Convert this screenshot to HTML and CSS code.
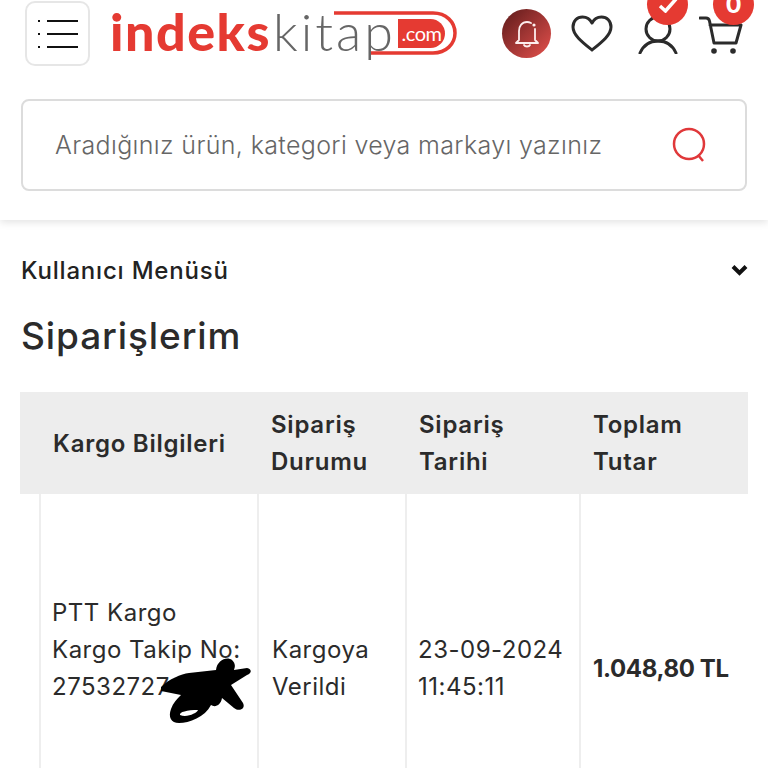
FILE: index.html
```html
<!DOCTYPE html>
<html lang="tr">
<head>
    <meta charset="UTF-8">
    <meta name="viewport" content="width=device-width, initial-scale=1.0">
    <title>Siparişlerim</title>
    <link rel="stylesheet" href="styles.css">
</head>
<body>
<!-- Header with logo, icons and search -->
<header class="site-header">
    <div class="top-row">
        <button class="menu-btn" type="button" aria-label="Menü">
            <svg width="42" height="32" viewBox="0 0 42 32">
                <path d="M1 3h2M1 16h2M1 29h2M10 3h31M10 16h31M10 29h31" stroke="#111" stroke-width="2" fill="none"/>
            </svg>
        </button>
        <a class="logo" href="#">
            <span class="logo-bold">indeks</span><span class="logo-thin">kitap</span>
            <span class="logo-com">.com</span>
            <svg class="logo-ring" width="125" height="46" viewBox="0 0 125 46">
                <path d="M1 3H100C113 3 122 12 122 23C122 34 113 43 100 43H38" stroke="#e53a32" stroke-width="3.5" fill="none"/>
            </svg>
        </a>
        <div class="icons">
            <span class="bell">
                <svg width="28" height="32" viewBox="0 0 28 32">
                    <path d="M6 22V13C6 8 9 4 14 4C16 4 17 4.500 18 5M22 11V22L25 25H3L6 22M11 27C12 29 16 29 17 27" stroke="#fdeeee" stroke-width="1.800" fill="none" stroke-linecap="round" stroke-linejoin="round"/>
                    <circle cx="21" cy="7" r="1.600" fill="#fdeeee"/>
                </svg>
            </span>
            <svg class="heart" width="44" height="38" viewBox="0 0 44 38">
                <path d="M22 35C12 27 3 20 3 12C3 6 7 2 12.500 2C16.500 2 20 4 22 8C24 4 27.500 2 31.500 2C37 2 41 6 41 12C41 20 32 27 22 35Z" stroke="#2b2b2b" stroke-width="3" fill="none" stroke-linejoin="round"/>
            </svg>
            <span class="icon-wrap">
                <svg width="40" height="38" viewBox="0 0 40 38">
                    <circle cx="20" cy="13" r="12" stroke="#2b2b2b" stroke-width="3" fill="none"/>
                    <path d="M2 37C6 28 12 25 20 25C28 25 34 28 38 37" stroke="#2b2b2b" stroke-width="3" fill="none" stroke-linecap="round"/>
                </svg>
                <span class="badge badge-user">
                    <svg width="20" height="16" viewBox="0 0 20 16"><path d="M2 9L7.500 14L18 2" stroke="#fff" stroke-width="3.500" fill="none"/></svg>
                </span>
            </span>
            <span class="icon-wrap icon-cart">
                <svg width="44" height="38" viewBox="0 0 44 38">
                    <path d="M1 2H7C9 2 10 3 10.500 5L15 27H37L42 9H11" stroke="#2b2b2b" stroke-width="3" fill="none" stroke-linecap="round" stroke-linejoin="round"/>
                    <circle cx="15" cy="35" r="2.800" fill="#2b2b2b"/>
                    <circle cx="34" cy="35" r="2.800" fill="#2b2b2b"/>
                </svg>
                <span class="badge badge-cart">0</span>
            </span>
        </div>
    </div>
    <div class="search-box">
        <span class="search-text">Aradığınız ürün, kategori veya markayı yazınız</span>
        <svg width="36" height="36" viewBox="0 0 36 36">
            <circle cx="17" cy="17" r="15" stroke="#e0383a" stroke-width="2.500" fill="none"/>
            <path d="M26 28L31 34" stroke="#e0383a" stroke-width="2.500"/>
        </svg>
    </div>
</header>

<main class="content">
    <div class="user-menu">
        <span>Kullanıcı Menüsü</span>
        <svg width="17" height="12" viewBox="0 0 17 12"><path d="M2 2.500L8.500 9L15 2.500" stroke="#111" stroke-width="4" fill="none"/></svg>
    </div>
    <h1>Siparişlerim</h1>

    <!-- Orders table -->
    <table class="orders">
        <colgroup>
            <col class="col-gap">
            <col class="col-cargo">
            <col class="col-status">
            <col class="col-date">
            <col class="col-total">
        </colgroup>
        <tr>
            <th></th>
            <th>Kargo Bilgileri</th>
            <th>Sipariş Durumu</th>
            <th>Sipariş Tarihi</th>
            <th>Toplam Tutar</th>
        </tr>
        <tr>
            <td></td>
            <td class="cargo-cell">
                PTT Kargo<br>Kargo Takip No:<br>27532727<br>&nbsp;
                <svg class="scribble" width="94" height="70" viewBox="0 0 94 70">
                    <path fill-rule="evenodd" d="M2 32C10 24 22 19 30 18L57 15C58 5 68 1 73 5C77 9 76 12 75 15L88 13C93 14 93 18 88 20L72 30L84 48C87 54 80 57 75 53L63 43C62 50 56 53 52 50C46 62 30 68 20 68C12 68 9 62 12 54C14 48 18 44 22 40L2 36ZM21 60C20 57 28 55 39 55C38 58 28 63 21 60Z" fill="#000"/>
                </svg>
            </td>
            <td class="status-cell">Kargoya Verildi</td>
            <td>23-09-2024 11:45:11</td>
            <td class="total">1.048,80 TL</td>
        </tr>
    </table>
</main>
</body>
</html>
```

FILE: styles.css
```css
/* Page */
html, body {
    height: 768px;
    overflow: hidden;
}

body {
    margin: 0;
    font-family: "Inter", "Open Sans", sans-serif;
    color: #2b2b2b;
    background-color: #fff;
}

/* Header */
.site-header {
    height: 220px;
    box-sizing: border-box;
    box-shadow: 0 2px 8px rgba(0, 0, 0, 0.12);
    padding: 1px 21px 0;
}

.top-row {
    display: flex;
    align-items: flex-start;
    height: 98px;
}

.menu-btn {
    width: 65px;
    height: 65px;
    margin-left: 4px;
    padding: 0;
    display: flex;
    align-items: center;
    justify-content: center;
    background-color: #fff;
    border: 2px solid #e6e6e6;
    border-radius: 10px;
}

.logo {
    position: relative;
    display: flex;
    align-items: baseline;
    width: 346px;
    height: 50px;
    margin: 7px 0 0 20px;
    font-family: "Lato", sans-serif;
    font-size: 52px;
    line-height: 46px;
    text-decoration: none;
}

.logo-bold {
    font-weight: 900;
    letter-spacing: 1.5px;
    color: #e53a32;
}

.logo-thin {
    margin-left: 2px;
    font-weight: 300;
    letter-spacing: 3px;
    color: #666;
}

.logo-com {
    position: absolute;
    left: 288px;
    top: 11px;
    width: 47px;
    height: 29px;
    border-radius: 0 15px 15px 0;
    background-color: #e53a32;
    color: #fff;
    font-size: 20px;
    line-height: 28px;
    font-weight: 400;
    letter-spacing: -0.5px;
    text-align: center;
}

.logo-ring {
    position: absolute;
    left: 223px;
    top: 2px;
}

.icons {
    display: flex;
    align-items: flex-start;
    margin-left: 46px;
}

.bell {
    width: 49px;
    height: 49px;
    margin-top: 8px;
    display: flex;
    align-items: center;
    justify-content: center;
    border-radius: 50%;
    background: linear-gradient(135deg, #5c1a1a, #e5514d);
}

.heart {
    margin: 14px 0 0 19px;
}

.icon-wrap {
    position: relative;
    display: block;
    margin: 15px 0 0 24px;
}

.icon-cart {
    margin-left: 21px;
}

.badge {
    position: absolute;
    top: -32px;
    width: 41px;
    height: 41px;
    display: flex;
    align-items: center;
    justify-content: center;
    border-radius: 50%;
    background-color: #e53a32;
    color: #fff;
    font-size: 24px;
    font-weight: 700;
}

.badge-user {
    left: 9px;
}

.badge-cart {
    left: 14px;
}

/* Search */
.search-box {
    display: flex;
    align-items: center;
    justify-content: space-between;
    height: 92px;
    box-sizing: border-box;
    padding: 0 37px 0 32px;
    border: 2px solid #dcdcdc;
    border-radius: 8px;
}

.search-text {
    font-size: 25px;
    font-weight: 300;
    letter-spacing: 0.35px;
    color: #666;
    white-space: nowrap;
}

/* Content */
.content {
    padding: 0 20px 0 20px;
}

.user-menu {
    display: flex;
    align-items: center;
    justify-content: space-between;
    height: 34px;
    margin-top: 33px;
    padding: 0 0 0 1px;
    font-size: 24px;
    font-weight: 500;
    letter-spacing: 0.8px;
    color: #222;
}

h1 {
    margin: 27px 0 34px 1px;
    font-size: 37px;
    line-height: 44px;
    font-weight: 500;
    letter-spacing: 0.9px;
    color: #2b2b2b;
}

.orders {
    width: 728px;
    table-layout: fixed;
    border-collapse: collapse;
    font-size: 24px;
    line-height: 37px;
}

.col-gap { width: 20px; }
.col-cargo { width: 218px; }
.col-status { width: 148px; }
.col-date { width: 174px; }
.col-total { width: 168px; }

.orders th {
    height: 102px;
    padding: 0 13px;
    text-align: left;
    font-weight: 600;
    letter-spacing: 0.75px;
    background-color: #ededed;
}

.orders td {
    height: 348px;
    padding: 0 11px;
    letter-spacing: 0.5px;
    border-left: 2px solid #eee;
}

.orders td:first-child {
    border-left: none;
}

.cargo-cell {
    position: relative;
}

.orders .status-cell {
    padding-left: 13px;
}

.orders .total {
    padding-left: 12px;
    font-weight: 700;
    letter-spacing: -0.35px;
}

.scribble {
    position: absolute;
    left: 118px;
    top: 161px;
}
```
